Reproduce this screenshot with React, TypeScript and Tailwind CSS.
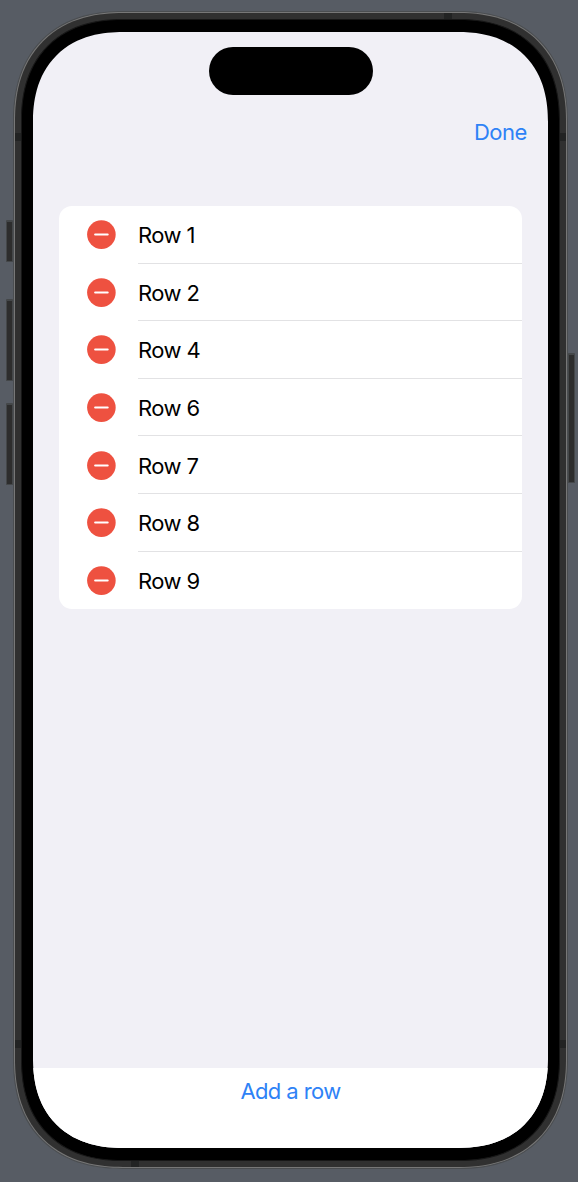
const rows = ["Row 1", "Row 2", "Row 4", "Row 6", "Row 7", "Row 8", "Row 9"];

function SideButton({ className }: { className: string }) {
  return (
    <span
      className={`block w-[7px] rounded-[1px] border border-[#444749] border-t-2 bg-[#2d2d2d] ${className}`}
    />
  );
}

function Seam({ className }: { className: string }) {
  return <span className={`absolute bg-[#222323] ${className}`} />;
}

function Row({ label, last }: { label: string; last: boolean }) {
  return (
    <li className="flex h-[57.6px] items-center gap-[22px] pl-7">
      <button type="button" aria-label={`Delete ${label}`} className="h-[29px] w-[29px] shrink-0">
        <svg viewBox="0 0 29 29" className="block h-full w-full">
          <circle cx="14.4" cy="14.6" r="14.3" fill="#ee5140" />
          <path d="M8.1 14.6H20.7" stroke="#fff" strokeWidth="2" strokeLinecap="round" />
        </svg>
      </button>
      <span
        className={`flex h-full flex-1 items-center pt-0.5 text-black ${last ? "" : "border-b border-[#e2e2e4]"}`}
      >
        {label}
      </span>
    </li>
  );
}

export default function App() {
  return (
    <div className="flex h-[1182px] w-[578px] items-start overflow-hidden bg-[#575c64] pl-[6px] font-['Inter','Liberation_Sans',sans-serif] text-[22px] leading-[28px] tracking-[-0.6px]">
      <div className="flex w-[7px] shrink-0 flex-col pt-[220px]">
        <SideButton className="h-[42px]" />
        <SideButton className="mt-[37px] h-[82px]" />
        <SideButton className="mt-[22px] h-[82px]" />
      </div>

      <div className="relative mt-[11px] h-[1158px] w-[555px] shrink-0 rounded-[100px] border border-[#4a4d50] bg-[#777777] p-px supports-[corner-shape:squircle]:rounded-[110px] supports-[corner-shape:squircle]:[corner-shape:superellipse(1.2)]">
        <div className="h-full w-full rounded-[98px] bg-[#303030] p-[6px] supports-[corner-shape:squircle]:rounded-[108px] supports-[corner-shape:squircle]:[corner-shape:superellipse(1.2)]">
          <div className="h-full w-full rounded-[92px] border border-[#171717] bg-black px-[11px] py-3 supports-[corner-shape:squircle]:rounded-[102px] supports-[corner-shape:squircle]:[corner-shape:superellipse(1.2)]">
            <main className="flex h-full w-full flex-col overflow-hidden rounded-[80px] bg-[#f1f0f6] supports-[corner-shape:squircle]:rounded-[90px] supports-[corner-shape:squircle]:[corner-shape:superellipse(1.2)]">
              <div className="flex shrink-0 justify-center pt-[15px]">
                <div className="h-12 w-[164px] rounded-full bg-black" />
              </div>
              <header className="flex shrink-0 justify-end pt-[23px] pr-[21px] tracking-[-0.45px]">
                <button type="button" className="text-[#2e82f6]">
                  Done
                </button>
              </header>
              <div className="px-[26px] pt-[60px]">
                <ul className="rounded-[13px] bg-white">
                  {rows.map((label, index) => (
                    <Row key={label} label={label} last={index === rows.length - 1} />
                  ))}
                </ul>
              </div>
              <footer className="mt-auto flex h-20 shrink-0 items-start justify-center bg-white pt-[9px]">
                <button type="button" className="text-[#2e82f6]">
                  Add a row
                </button>
              </footer>
            </main>
          </div>
        </div>
        <Seam className="top-[121px] left-px h-2 w-[6px]" />
        <Seam className="top-[121px] right-px h-2 w-[6px]" />
        <Seam className="top-[1028px] left-px h-2 w-[6px]" />
        <Seam className="top-[1028px] right-px h-2 w-[6px]" />
        <Seam className="top-px left-[430px] h-[6px] w-2" />
        <Seam className="bottom-px left-[117px] h-[6px] w-2" />
      </div>

      <div className="w-[7px] shrink-0 pt-[353px]">
        <SideButton className="h-[130px]" />
      </div>
    </div>
  );
}
